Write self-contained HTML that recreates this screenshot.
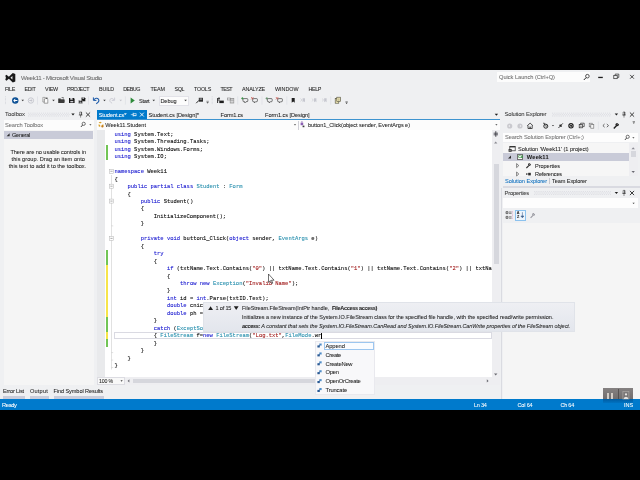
<!DOCTYPE html>
<html lang="en"><head><meta charset="utf-8"><title>Week11 - Microsoft Visual Studio</title>
<style>
html,body{margin:0;padding:0;background:#000;}
body{width:640px;height:480px;overflow:hidden;position:relative;font-family:"Liberation Sans",sans-serif;}
#w{position:absolute;left:0;top:70px;width:640px;height:340px;background:#eff0f2;overflow:hidden;will-change:transform;}
#w div,#w span,#w svg{position:absolute;}
#w span{white-space:pre;line-height:10px;height:10px;-webkit-text-stroke:0.06px currentColor;}
.m{-webkit-text-stroke:0.1px currentColor !important;}
.m{font-family:"Liberation Mono",monospace;}
.m b{font-weight:normal;}
.k{color:#1a1ad0;}.t{color:#2b91af;}.s{color:#a32020;}
</style></head><body><div id="w">
<span style="left:21.00px;top:3.00px;font-size:6.2px;color:#6a6a6a;letter-spacing:-0.295px;">Week11 - Microsoft Visual Studio</span>
<div style="left:497px;top:2.299999999999997px;width:93px;height:9.3px;background:#fcfcfc;"></div>
<span style="left:499.00px;top:2.40px;font-size:5.7px;color:#6d6d6d;letter-spacing:-0.036px;">Quick Launch (Ctrl+Q)</span>
<span style="left:5.00px;top:14.00px;font-size:5.4px;color:#1e1e1e;letter-spacing:-0.348px;">FILE</span>
<span style="left:24.40px;top:14.00px;font-size:5.4px;color:#1e1e1e;letter-spacing:-0.270px;">EDIT</span>
<span style="left:45.00px;top:14.00px;font-size:5.4px;color:#1e1e1e;letter-spacing:-0.195px;">VIEW</span>
<span style="left:67.00px;top:14.00px;font-size:5.4px;color:#1e1e1e;letter-spacing:-0.453px;">PROJECT</span>
<span style="left:99.00px;top:14.00px;font-size:5.4px;color:#1e1e1e;letter-spacing:-0.178px;">BUILD</span>
<span style="left:123.20px;top:14.00px;font-size:5.4px;color:#1e1e1e;letter-spacing:-0.474px;">DEBUG</span>
<span style="left:150.40px;top:14.00px;font-size:5.4px;color:#1e1e1e;letter-spacing:-0.096px;">TEAM</span>
<span style="left:174.60px;top:14.00px;font-size:5.4px;color:#1e1e1e;letter-spacing:-0.466px;">SQL</span>
<span style="left:194.00px;top:14.00px;font-size:5.4px;color:#1e1e1e;letter-spacing:-0.237px;">TOOLS</span>
<span style="left:220.40px;top:14.00px;font-size:5.4px;color:#1e1e1e;letter-spacing:-0.545px;">TEST</span>
<span style="left:242.00px;top:14.00px;font-size:5.4px;color:#1e1e1e;letter-spacing:-0.167px;">ANALYZE</span>
<span style="left:275.00px;top:14.00px;font-size:5.4px;color:#1e1e1e;letter-spacing:-0.009px;">WINDOW</span>
<span style="left:308.40px;top:14.00px;font-size:5.4px;color:#1e1e1e;letter-spacing:-0.373px;">HELP</span>
<span style="left:139.00px;top:25.50px;font-size:5.6px;color:#1e1e1e;letter-spacing:-0.286px;">Start</span>
<div style="left:159px;top:26px;width:29.5px;height:9.5px;background:#fcfcfc;border:0.5px solid #e2e2e8;box-sizing:border-box;"></div>
<span style="left:160.40px;top:25.50px;font-size:5.6px;color:#1e1e1e;letter-spacing:-0.057px;">Debug</span>
<div style="left:4px;top:49.5px;width:89.5px;height:265.5px;background:#f5f5f5;"></div>
<span style="left:5.00px;top:39.40px;font-size:5.9px;color:#3c3c3c;letter-spacing:-0.045px;">Toolbox</span>
<div style="left:4px;top:49.5px;width:89.5px;height:10.5px;background:#fcfcfc;"></div>
<span style="left:5.00px;top:49.50px;font-size:5.7px;color:#747474;letter-spacing:-0.079px;">Search Toolbox</span>
<div style="left:4px;top:61px;width:89.3px;height:7.6px;background:#c9cbd8;"></div>
<span style="left:12.00px;top:59.90px;font-size:5.6px;color:#1e1e1e;letter-spacing:-0.272px;">General</span>
<span style="left:10.40px;top:77.30px;font-size:5.6px;color:#1e1e1e;letter-spacing:-0.049px;">There are no usable controls in</span>
<span style="left:11.60px;top:84.10px;font-size:5.6px;color:#1e1e1e;letter-spacing:0.043px;">this group. Drag an item onto</span>
<span style="left:8.80px;top:90.90px;font-size:5.6px;color:#1e1e1e;">this text to add it to the toolbox.</span>
<svg style="left:0;top:0;width:640px;height:340px" viewBox="0 70 640 340"><g transform="translate(5.3 73.1) scale(0.0625)" fill="#1a1a1a" fill-rule="evenodd"><path d="M120 0L160 16V134L120 150L40 75ZM114 48V102L82 75Z"/><path d="M0 42L18 28L76 75L18 122L0 108L10 75Z"/></g><circle cx="587.4" cy="76.2" r="1.8" fill="none" stroke="#2b2b2b" stroke-width="0.8"/><line x1="586.1" y1="77.6" x2="583.8" y2="80" stroke="#2b2b2b" stroke-width="1.0" /><rect x="598.2" y="76.8" width="4.6" height="1.3" fill="#1e1e1e"/><rect x="613.8" y="75.6" width="3.4" height="3.1" fill="none" stroke="#1e1e1e" stroke-width="0.65"/><path d="M615.2 75.4v-1.3h3.6v3.3h-1.4" fill="none" stroke="#1e1e1e" stroke-width="0.65"/><path d="M630.1 74.9L633.9 78.7M633.9 74.9L630.1 78.7" fill="none" stroke="#1e1e1e" stroke-width="0.8"/><line x1="5.5" y1="96.5" x2="5.5" y2="104.5" stroke="#c2c3cc" stroke-width="0.7" stroke-dasharray="0.6 0.8"/><circle cx="15.25" cy="100.5" r="3.2" fill="#0b4f94"/><path d="M13.2 100.5l2-1.9v1.3h2.2v1.2h-2.2v1.3z" fill="#fff"/><path d="M21.45 99.75h2.6l-1.3 1.5z" fill="#3a3a3a"/><circle cx="30.9" cy="100.5" r="2.7" fill="none" stroke="#c3c4cc" stroke-width="0.9"/><path d="M32.6 100.5l-1.7-1.5v1h-1.6v1h1.6v1z" fill="#c3c4cc"/><line x1="37.5" y1="96.4" x2="37.5" y2="104.6" stroke="#d9dae0" stroke-width="0.6" /><path d="M44.2 98.2h2.2l1.4 1.4v3.6h-3.6z" fill="#fbfbfb" stroke="#5a5a5a" stroke-width="0.55"/><path d="M42.8 97.4h2.4v1.6h-1v3h-1.4z" fill="#f4f4f4" stroke="#6e6e6e" stroke-width="0.5"/><rect x="46.2" y="97.6" width="1.3" height="1.3" fill="#3a3a3a"/><path d="M52.2 99.75h2.6l-1.3 1.5z" fill="#3a3a3a"/><path d="M58.3 98.4h2.2l0.6 0.8h3.3v3.9h-6.1z" fill="#262626"/><path d="M59.6 100.6h5.2l-1 2.5h-5z" fill="#3c3c3c"/><path d="M61.6 97.6h1.8v1" fill="none" stroke="#262626" stroke-width="0.6"/><rect x="59.3" y="99.6" width="4.2" height="0.5" fill="#8a8a8a"/><path d="M69 98h4.8l0.8 0.8v4.2h-5.6z" fill="#161616"/><rect x="70.3" y="98" width="2.6" height="1.7" fill="#e4e4e8"/><rect x="70.3" y="100.9" width="3" height="1.5" fill="#d0d0d6"/><rect x="71.9" y="98.2" width="0.7" height="1.2" fill="#161616"/><path d="M81.5 97.6h3.2l0.6 0.6v3.1h-3.8z" fill="#161616"/><rect x="82.4" y="97.6" width="1.7" height="1.1" fill="#e4e4e8"/><path d="M78.6 100.2h3.3l0.6 0.6v2.6h-3.9z" fill="#161616" stroke="#eff0f2" stroke-width="0.35"/><rect x="79.5" y="100.3" width="1.7" height="1" fill="#e4e4e8"/><rect x="79.6" y="102.3" width="1.9" height="0.9" fill="#c8c8ce"/><line x1="88.5" y1="96.4" x2="88.5" y2="104.6" stroke="#d9dae0" stroke-width="0.6" /><path d="M93.4 97.4v3h3" fill="none" stroke="#1c5aa8" stroke-width="1.0"/><path d="M93.8 100c1.2-1.9 3.4-2.3 4.6-0.9 1.2 1.5 0.2 3.6-2.2 4.6" fill="none" stroke="#1c5aa8" stroke-width="1.1"/><path d="M103.2 99.75h2.6l-1.3 1.5z" fill="#3a3a3a"/><path d="M114.6 97.6v2.8h-2.8" fill="none" stroke="#c9cad2" stroke-width="0.9"/><path d="M114.2 100c-1-1.7-3-2-4-0.8-1 1.3-0.2 3.1 1.9 4" fill="none" stroke="#c9cad2" stroke-width="0.9"/><path d="M119.45 99.75h2.6l-1.3 1.5z" fill="#c0c1c9"/><line x1="125.4" y1="96.4" x2="125.4" y2="104.6" stroke="#d9dae0" stroke-width="0.6" /><path d="M130.6 97.5l4.2 3-4.2 3z" fill="#2d8a3a"/><path d="M152.45 99.75h2.6l-1.3 1.5z" fill="#3a3a3a"/><path d="M184.3 99.75h2.6l-1.3 1.5z" fill="#3a3a3a"/><path d="M198.8 97.8h4.2v3.9h-4.2z" fill="#2b2b2b"/><rect x="199.6" y="98.6" width="2.6" height="0.9" fill="#c9cad0"/><path d="M196.2 103.2l2.8-2.9" fill="none" stroke="#2b2b2b" stroke-width="1.0"/><path d="M206.4 102.2h2.4l-1.2 1.4z" fill="#3a3a3a"/><line x1="206.4" y1="101.3" x2="208.8" y2="101.3" stroke="#3a3a3a" stroke-width="0.5" /><line x1="212.2" y1="96.5" x2="212.2" y2="104.5" stroke="#c2c3cc" stroke-width="0.7" stroke-dasharray="0.6 0.8"/><path d="M217.6 98v5M217.6 100h2.2" fill="none" stroke="#1e1e1e" stroke-width="0.9"/><rect x="219.3" y="100.6" width="4.5" height="2.5" fill="#1e1e1e"/><rect x="218.2" y="97.6" width="1.6" height="1.4" fill="#1e1e1e"/><rect x="227.4" y="98" width="3" height="2" fill="none" stroke="#8a8a8a" stroke-width="0.6"/><rect x="230.2" y="98.4" width="3.6" height="4.6" fill="none" stroke="#8a8a8a" stroke-width="0.7"/><line x1="230.2" y1="100.2" x2="233.8" y2="100.2" stroke="#8a8a8a" stroke-width="0.6" /><line x1="232" y1="98.4" x2="232" y2="103" stroke="#8a8a8a" stroke-width="0.5" /><line x1="237.75" y1="96.4" x2="237.75" y2="104.6" stroke="#d9dae0" stroke-width="0.6" /><path d="M243.8 98.6h3.2q0.8 0 0.8 0.8v1.5q0 0.8-0.8 0.8h-1l-1.1 1.2-0.2-1.2h-0.9q-0.8 0-0.8-0.8v-1.5q0-0.8 0.8-0.8z" fill="none" stroke="#333" stroke-width="0.65"/><path d="M242.4 97.2v2.4M241.2 98.4h2.4" fill="none" stroke="#2c8a3a" stroke-width="0.8"/><path d="M253.4 98.6h3.2q0.8 0 0.8 0.8v1.5q0 0.8-0.8 0.8h-1l-1.1 1.2-0.2-1.2h-0.9q-0.8 0-0.8-0.8v-1.5q0-0.8 0.8-0.8z" fill="none" stroke="#333" stroke-width="0.65"/><path d="M251.2 97.2l2.2 2.2M253.4 97.2l-2.2 2.2" fill="none" stroke="#c2463c" stroke-width="0.75"/><line x1="262" y1="96.4" x2="262" y2="104.6" stroke="#d9dae0" stroke-width="0.6" /><path d="M268.2 98.6h3.2q0.8 0 0.8 0.8v1.5q0 0.8-0.8 0.8h-1l-1.1 1.2-0.2-1.2h-0.9q-0.8 0-0.8-0.8v-1.5q0-0.8 0.8-0.8z" fill="none" stroke="#333" stroke-width="0.65"/><path d="M266.8 97.2v2.4M265.6 98.4h2.4" fill="none" stroke="#5a8a62" stroke-width="0.8"/><path d="M278.4 98.6h3.2q0.8 0 0.8 0.8v1.5q0 0.8-0.8 0.8h-1l-1.1 1.2-0.2-1.2h-0.9q-0.8 0-0.8-0.8v-1.5q0-0.8 0.8-0.8z" fill="none" stroke="#333" stroke-width="0.65"/><path d="M276 97.2l2.2 2.2M278.2 97.2l-2.2 2.2" fill="none" stroke="#c2463c" stroke-width="0.75"/><line x1="286.8" y1="96.4" x2="286.8" y2="104.6" stroke="#d9dae0" stroke-width="0.6" /><path d="M291.7 97.9h3v4.8l-1.5-1.2-1.5 1.2z" fill="#1e1e1e"/><path d="M302.6 98.2h2.4v4l-1.2-1-1.2 1z" fill="#c6c7cf"/><path d="M300.4 98.6l1.6 1.4-1.6 1.4" fill="none" stroke="#c6c7cf" stroke-width="0.6"/><path d="M314.0 98.2h2.4v4l-1.2-1-1.2 1z" fill="#c6c7cf"/><path d="M311.79999999999995 98.6l1.6 1.4-1.6 1.4" fill="none" stroke="#c6c7cf" stroke-width="0.6"/><path d="M324.20000000000005 98.2h2.4v4l-1.2-1-1.2 1z" fill="#c6c7cf"/><path d="M322.0 98.6l1.6 1.4-1.6 1.4" fill="none" stroke="#c6c7cf" stroke-width="0.6"/><line x1="330.7" y1="96.4" x2="330.7" y2="104.6" stroke="#d9dae0" stroke-width="0.6" /><rect x="335.2" y="98.6" width="3.6" height="4.6" fill="#f3e9b8" stroke="#4a4a3a" stroke-width="0.6"/><rect x="336.8" y="97.2" width="3.8" height="4.4" fill="#f3e9b8" stroke="#4a4a3a" stroke-width="0.6"/><path d="M337.8 99h1.8M337.8 100.2h1.8" fill="none" stroke="#6a6a4a" stroke-width="0.4"/><path d="M345.4 102.6h2.4l-1.2 1.4z" fill="#3a3a3a"/><line x1="345.4" y1="101.7" x2="347.8" y2="101.7" stroke="#3a3a3a" stroke-width="0.5" /><line x1="28" y1="113.2" x2="69.5" y2="113.2" stroke="#b9b9c4" stroke-width="0.55" stroke-dasharray="0.6 1.3"/><line x1="28.95" y1="114.6" x2="69.5" y2="114.6" stroke="#b9b9c4" stroke-width="0.55" stroke-dasharray="0.6 1.3"/><line x1="28" y1="116" x2="69.5" y2="116" stroke="#b9b9c4" stroke-width="0.55" stroke-dasharray="0.6 1.3"/><path d="M71.3 113.6h3.4l-1.7 2z" fill="#1e1e1e"/><path d="M79.7 112h1.9v3h-1.9zM78.8 115h3.7M80.6 115v2.6" fill="none" stroke="#2b2b2b" stroke-width="0.5"/><rect x="80.95" y="112" width="0.6" height="3" fill="#2b2b2b"/><path d="M85.9 112.5L90.1 116.7M90.1 112.5L85.9 116.7" fill="none" stroke="#1e1e1e" stroke-width="0.85"/><circle cx="83.7" cy="123.8" r="1.6" fill="none" stroke="#2b2b2b" stroke-width="0.65"/><line x1="82.6" y1="125" x2="80.9" y2="127" stroke="#2b2b2b" stroke-width="0.85" /><path d="M89.3 124.15h2.2l-1.1 1.3z" fill="#3a3a3a"/><path d="M9.6 133.3v3h-3z" fill="#2b2b2b"/></svg>
<div style="left:97px;top:40.2px;width:49.5px;height:9px;background:#007acc;"></div>
<div style="left:97px;top:48.8px;width:403px;height:1.3px;background:#3d93cf;"></div>
<span style="left:98.70px;top:39.50px;font-size:5.7px;color:#fff;letter-spacing:-0.127px;">Student.cs*</span>
<span style="left:148.60px;top:39.50px;font-size:5.7px;color:#1e1e1e;letter-spacing:-0.057px;">Student.cs [Design]*</span>
<span style="left:220.60px;top:39.50px;font-size:5.7px;color:#1e1e1e;letter-spacing:-0.163px;">Form1.cs</span>
<span style="left:265.00px;top:39.50px;font-size:5.7px;color:#1e1e1e;letter-spacing:-0.092px;">Form1.cs [Design]</span>
<div style="left:97px;top:50px;width:402.5px;height:10px;background:#fcfcfc;"></div>
<div style="left:97px;top:59.599999999999994px;width:402.5px;height:0.6px;background:#d4d4dc;"></div>
<span style="left:105.30px;top:49.60px;font-size:5.6px;color:#1e1e1e;letter-spacing:-0.010px;">Week11.Student</span>
<span style="left:308.00px;top:49.60px;font-size:5.6px;color:#1e1e1e;letter-spacing:-0.061px;">button1_Click(object sender, EventArgs e)</span>
<div style="left:297.5px;top:50.5px;width:0.6px;height:9px;background:#cfcfd6;"></div>
<div style="left:97px;top:60.19999999999999px;width:395px;height:247px;background:#ffffff;"></div>
<div style="left:97px;top:60.19999999999999px;width:7.6px;height:247px;background:#e9eaec;"></div>
<div style="left:105.6px;top:75.19999999999999px;width:2.4px;height:15px;background:#72c555;"></div>
<div style="left:105.6px;top:180px;width:2.4px;height:14.5px;background:#72c555;"></div>
<div style="left:105.6px;top:194.5px;width:2.4px;height:52.5px;background:#f7e54a;"></div>
<div style="left:105.6px;top:247px;width:2.4px;height:15px;background:#72c555;"></div>
<div style="left:105.6px;top:262px;width:2.4px;height:7px;background:#f7e54a;"></div>
<div style="left:105.6px;top:269px;width:2.4px;height:7.6px;background:#72c555;"></div>
<div style="left:113.6px;top:262.4px;width:378.4px;height:6.8px;background:#fff;border:0.6px solid #dadae2;box-sizing:border-box;"></div>
<svg style="left:0;top:0;width:640px;height:340px" viewBox="0 70 640 340"><path d="M133.2 113.5h3v2.2h-3zM133.2 112.7v3.8M133.2 114.6h-2.4" fill="none" stroke="#e8f3fb" stroke-width="0.6"/><rect x="133.2" y="114.9" width="3" height="0.8" fill="#e8f3fb"/><path d="M140 112.7L143.8 116.5M143.8 112.7L140 116.5" fill="none" stroke="#fff" stroke-width="0.9"/><path d="M494.7 113.8h3.4l-1.7 2z" fill="#1e1e1e"/><path d="M98.6 122.6l1.6-0.8 1.6 0.8-1.6 0.8zM98.6 124.2l1.6 0.8v2l-1.6-0.8zM103.4 124.2l-1.6 0.8v2l1.6-0.8z" fill="#d8a12c"/><circle cx="102.4" cy="126.4" r="1.1" fill="#c47a1a"/><path d="M293.9 124.15h2.2l-1.1 1.3z" fill="#3a3a3a"/><rect x="300.6" y="122.6" width="2.6" height="2.6" fill="#8b5fb3"/><rect x="302.6" y="125.6" width="1.8" height="1.6" fill="#3a3a3a"/><path d="M301 121.8h1.8" fill="none" stroke="#6d3f99" stroke-width="0.5"/><path d="M495.3 124.15h2.2l-1.1 1.3z" fill="#3a3a3a"/><line x1="111.5" y1="175" x2="111.5" y2="369.5" stroke="#b2b2b2" stroke-width="0.4" /><rect x="109.5" y="169.28" width="4" height="4" fill="#fff" stroke="#b2b2b2" stroke-width="0.5"/><line x1="110.4" y1="171.28" x2="112.6" y2="171.28" stroke="#555" stroke-width="0.5" /><rect x="109.5" y="184.19" width="4" height="4" fill="#fff" stroke="#b2b2b2" stroke-width="0.5"/><line x1="110.4" y1="186.19" x2="112.6" y2="186.19" stroke="#555" stroke-width="0.5" /><rect x="109.5" y="199.09" width="4" height="4" fill="#fff" stroke="#b2b2b2" stroke-width="0.5"/><line x1="110.4" y1="201.09" x2="112.6" y2="201.09" stroke="#555" stroke-width="0.5" /><rect x="109.5" y="236.37" width="4" height="4" fill="#fff" stroke="#b2b2b2" stroke-width="0.5"/><line x1="110.4" y1="238.37" x2="112.6" y2="238.37" stroke="#555" stroke-width="0.5" /><line x1="111.5" y1="225.86" x2="113.2" y2="225.86" stroke="#b2b2b2" stroke-width="0.4" /><line x1="111.5" y1="352.59" x2="113.2" y2="352.59" stroke="#b2b2b2" stroke-width="0.4" /><line x1="111.5" y1="360.05" x2="113.2" y2="360.05" stroke="#b2b2b2" stroke-width="0.4" /><line x1="111.5" y1="367.5" x2="113.2" y2="367.5" stroke="#b2b2b2" stroke-width="0.4" /></svg>
<span class="m" style="left:114.4px;top:59.90px;font-size:5.47px;color:#0c0c0c;"><b class="k">using</b> System.Text;</span>
<span class="m" style="left:114.4px;top:67.36px;font-size:5.47px;color:#0c0c0c;"><b class="k">using</b> System.Threading.Tasks;</span>
<span class="m" style="left:114.4px;top:74.81px;font-size:5.47px;color:#0c0c0c;"><b class="k">using</b> System.Windows.Forms;</span>
<span class="m" style="left:114.4px;top:82.27px;font-size:5.47px;color:#0c0c0c;"><b class="k">using</b> System.IO;</span>
<span class="m" style="left:114.4px;top:97.18px;font-size:5.47px;color:#0c0c0c;"><b class="k">namespace</b> Week11</span>
<span class="m" style="left:114.4px;top:104.63px;font-size:5.47px;color:#0c0c0c;">{</span>
<span class="m" style="left:114.4px;top:112.09px;font-size:5.47px;color:#0c0c0c;">    <b class="k">public partial class</b> <b class="t">Student</b> : <b class="t">Form</b></span>
<span class="m" style="left:114.4px;top:119.54px;font-size:5.47px;color:#0c0c0c;">    {</span>
<span class="m" style="left:114.4px;top:127.00px;font-size:5.47px;color:#0c0c0c;">        <b class="k">public</b> Student()</span>
<span class="m" style="left:114.4px;top:134.45px;font-size:5.47px;color:#0c0c0c;">        {</span>
<span class="m" style="left:114.4px;top:141.91px;font-size:5.47px;color:#0c0c0c;">            InitializeComponent();</span>
<span class="m" style="left:114.4px;top:149.36px;font-size:5.47px;color:#0c0c0c;">        }</span>
<span class="m" style="left:114.4px;top:164.27px;font-size:5.47px;color:#0c0c0c;">        <b class="k">private void</b> button1_Click(<b class="k">object</b> sender, <b class="t">EventArgs</b> e)</span>
<span class="m" style="left:114.4px;top:171.73px;font-size:5.47px;color:#0c0c0c;">        {</span>
<span class="m" style="left:114.4px;top:179.18px;font-size:5.47px;color:#0c0c0c;">            <b class="k">try</b></span>
<span class="m" style="left:114.4px;top:186.63px;font-size:5.47px;color:#0c0c0c;">            {</span>
<span class="m" style="left:114.4px;top:194.09px;font-size:5.47px;color:#0c0c0c;">                <b class="k">if</b> (txtName.Text.Contains(<b class="s">"0"</b>) || txtName.Text.Contains(<b class="s">"1"</b>) || txtName.Text.Contains(<b class="s">"2"</b>) || txtNa</span>
<span class="m" style="left:114.4px;top:201.55px;font-size:5.47px;color:#0c0c0c;">                {</span>
<span class="m" style="left:114.4px;top:209.00px;font-size:5.47px;color:#0c0c0c;">                    <b class="k">throw new</b> <b class="t">Exception</b>(<b class="s">"Invalid Name"</b>);</span>
<span class="m" style="left:114.4px;top:216.46px;font-size:5.47px;color:#0c0c0c;">                }</span>
<span class="m" style="left:114.4px;top:223.91px;font-size:5.47px;color:#0c0c0c;">                <b class="k">int</b> id = <b class="k">int</b>.Parse(txtID.Text);</span>
<span class="m" style="left:114.4px;top:231.37px;font-size:5.47px;color:#0c0c0c;">                <b class="k">double</b> cnic</span>
<span class="m" style="left:114.4px;top:238.82px;font-size:5.47px;color:#0c0c0c;">                <b class="k">double</b> ph =</span>
<span class="m" style="left:114.4px;top:246.27px;font-size:5.47px;color:#0c0c0c;">            }</span>
<span class="m" style="left:114.4px;top:253.73px;font-size:5.47px;color:#0c0c0c;">            <b class="k">catch</b> (<b class="t">ExceptSo</b></span>
<span class="m" style="left:114.4px;top:261.19px;font-size:5.47px;color:#0c0c0c;">            { <b class="t">FileStream</b> f=<b class="k">new</b> <b class="t">FileStream</b>(<b class="s">"Log.txt"</b>,<b class="t">FileMode</b>.wr</span>
<span class="m" style="left:114.4px;top:268.64px;font-size:5.47px;color:#0c0c0c;">            }</span>
<span class="m" style="left:114.4px;top:276.10px;font-size:5.47px;color:#0c0c0c;">        }</span>
<span class="m" style="left:114.4px;top:283.55px;font-size:5.47px;color:#0c0c0c;">    }</span>
<span class="m" style="left:114.4px;top:291.00px;font-size:5.47px;color:#0c0c0c;">}</span>
<div style="left:321.2px;top:263.2px;width:0.6px;height:5.4px;background:#000;"></div>
<div style="left:492px;top:60.19999999999999px;width:7.5px;height:254.5px;background:#eeeef1;"></div>
<div style="left:494px;top:94px;width:4.5px;height:100px;background:#d6d7dd;"></div>
<div style="left:97px;top:307px;width:395px;height:7.7px;background:#eeeef1;"></div>
<div style="left:133px;top:308.7px;width:232.5px;height:4.2px;background:#d6d7dd;"></div>
<div style="left:97px;top:307px;width:28px;height:7.7px;background:#f8f8f8;border:0.5px solid #dcdce2;box-sizing:border-box;"></div>
<span style="left:99.00px;top:305.80px;font-size:5.3px;color:#1e1e1e;letter-spacing:-0.206px;">100 %</span>
<span style="left:3.00px;top:316.20px;font-size:5.6px;color:#1e1e1e;letter-spacing:-0.170px;">Error List</span>
<span style="left:30.00px;top:316.20px;font-size:5.6px;color:#1e1e1e;letter-spacing:0.201px;">Output</span>
<span style="left:53.50px;top:316.20px;font-size:5.6px;color:#1e1e1e;letter-spacing:-0.095px;">Find Symbol Results</span>
<div style="left:3px;top:326.2px;width:21.5px;height:2.8px;background:#c9ccda;"></div>
<div style="left:30px;top:326.2px;width:18.5px;height:2.8px;background:#c9ccda;"></div>
<div style="left:53.5px;top:326.2px;width:50px;height:2.8px;background:#c9ccda;"></div>
<div style="left:502.5px;top:72.5px;width:135px;height:33.6px;background:#f6f6f6;"></div>
<span style="left:504.60px;top:39.40px;font-size:5.9px;color:#3c3c3c;letter-spacing:-0.180px;">Solution Explorer</span>
<div style="left:502.5px;top:62.599999999999994px;width:135px;height:9.8px;background:#fdfdfd;"></div>
<span style="left:505.00px;top:62.40px;font-size:5.7px;color:#747474;letter-spacing:-0.098px;">Search Solution Explorer (Ctrl+;)</span>
<div style="left:629px;top:73px;width:8.5px;height:33px;background:#eeeef1;"></div>
<div style="left:631px;top:80.80000000000001px;width:4.6px;height:6.4px;background:#d6d7dd;"></div>
<span style="left:518.00px;top:73.90px;font-size:5.6px;color:#1e1e1e;">Solution &#x27;Week11&#x27; (1 project)</span>
<div style="left:502.5px;top:83px;width:126.5px;height:8px;background:#c9cbd8;"></div>
<div style="left:517px;top:83.9px;width:6.4px;height:6.2px;background:#f6f9f4;border:0.55px solid #707070;box-sizing:border-box;"></div>
<span style="left:518.20px;top:82.00px;font-size:3.7px;color:#2f8f3f;letter-spacing:-0.159px;font-weight:bold;">C#</span>
<span style="left:526.80px;top:82.20px;font-size:5.7px;color:#1e1e1e;letter-spacing:0.203px;font-weight:bold;">Week11</span>
<span style="left:535.00px;top:90.50px;font-size:5.6px;color:#1e1e1e;letter-spacing:-0.050px;">Properties</span>
<span style="left:535.00px;top:98.90px;font-size:5.6px;color:#1e1e1e;letter-spacing:-0.161px;">References</span>
<span style="left:505.00px;top:105.60px;font-size:5.6px;color:#0e70c0;letter-spacing:-0.036px;">Solution Explorer</span>
<div style="left:549.3px;top:107.5px;width:0.6px;height:6.5px;background:#c6c7ce;"></div>
<span style="left:552.00px;top:105.60px;font-size:5.6px;color:#1e1e1e;letter-spacing:-0.097px;">Team Explorer</span>
<div style="left:502.5px;top:115.6px;width:137.5px;height:2.8px;background:#d9dae1;"></div>
<div style="left:500.7px;top:118px;width:0.7px;height:211px;background:#dadbe1;"></div>
<div style="left:502.5px;top:152.5px;width:137.5px;height:176.5px;background:#f5f5f5;"></div>
<span style="left:504.50px;top:117.90px;font-size:5.9px;color:#3c3c3c;letter-spacing:-0.236px;">Properties</span>
<div style="left:502.5px;top:127.6px;width:135px;height:10.8px;background:#fdfdfd;"></div>
<div style="left:515px;top:140px;width:10.8px;height:10.5px;background:#eef5fc;border:0.6px solid #8cc2ee;box-sizing:border-box;"></div>
<svg style="left:0;top:0;width:640px;height:340px" viewBox="0 70 640 340"><path d="M120.5 380.35h2.2l-1.1 1.3z" fill="#3a3a3a"/><path d="M129.4 379.3v3.2l-1.8-1.6z" fill="#6a6a72"/><path d="M486.8 379.3v3.2l1.8-1.6z" fill="#6a6a72"/><path d="M494 373.6h3.4l-1.7 1.9z" fill="#6a6a72"/><path d="M494 143.4h3.4l-1.7-1.9z" fill="#8a8a92"/><path d="M493.6 133.2h4.4M493.6 134.8h4.4" fill="none" stroke="#3a3a42" stroke-width="0.8"/><path d="M495.8 131.2v5.6" fill="none" stroke="#3a3a42" stroke-width="0.9"/><line x1="552" y1="113.2" x2="611" y2="113.2" stroke="#b9b9c4" stroke-width="0.55" stroke-dasharray="0.6 1.3"/><line x1="552.95" y1="114.6" x2="611" y2="114.6" stroke="#b9b9c4" stroke-width="0.55" stroke-dasharray="0.6 1.3"/><line x1="552" y1="116" x2="611" y2="116" stroke="#b9b9c4" stroke-width="0.55" stroke-dasharray="0.6 1.3"/><path d="M614.7 113.6h3.4l-1.7 2z" fill="#1e1e1e"/><path d="M623.1 112h1.9v3h-1.9zM622.2 115h3.7M624 115v2.6" fill="none" stroke="#2b2b2b" stroke-width="0.5"/><rect x="624.35" y="112" width="0.6" height="3" fill="#2b2b2b"/><path d="M629.9 112.5L634.1 116.7M634.1 112.5L629.9 116.7" fill="none" stroke="#1e1e1e" stroke-width="0.85"/><circle cx="509.7" cy="126" r="2.6" fill="#c9c9ce"/><circle cx="520" cy="126" r="2.6" fill="#c9c9ce"/><path d="M508.3 126l1.5-1.3v2.6zM521.4 126l-1.5-1.3v2.6z" fill="#f0f0f3"/><path d="M527.2 125.8l2.9-2.7 2.9 2.7M528 125.6v2.9h4.2v-2.9" fill="none" stroke="#2b2b2b" stroke-width="0.8"/><rect x="529.5" y="126.6" width="1.2" height="1.9" fill="#2b2b2b"/><circle cx="545.8" cy="126.2" r="2" fill="none" stroke="#1e1e1e" stroke-width="0.95"/><path d="M545.8 125v1.3h1" fill="none" stroke="#1e1e1e" stroke-width="0.6"/><path d="M543 123.2l1.8 0.2-0.5 1.5" fill="none" stroke="#1e1e1e" stroke-width="0.7"/><path d="M551.9 124.95h2.2l-1.1 1.3z" fill="#3a3a3a"/><path d="M558.4 128l2.4-2.4M559.4 125.4h1.6v1.6M562.8 123.4l-2.4 2.4M561.8 126h-1.6v-1.6" fill="none" stroke="#1e1e1e" stroke-width="0.85"/><circle cx="571" cy="125.8" r="2.7" fill="#1e1e1e"/><circle cx="571" cy="125.8" r="1.3" fill="none" stroke="#f0f0f2" stroke-width="0.7"/><path d="M569.4 124.2l1.6 1.6M572.6 127.4l-1.6-1.6M572.8 124.6l-1.8 1.2" fill="none" stroke="#1e1e1e" stroke-width="0.7"/><rect x="579.2" y="124.6" width="3.4" height="3.2" fill="#f5f5f5" stroke="#2b2b2b" stroke-width="0.7"/><path d="M580.6 124.4v-1.2h3.6v3.4h-1.4" fill="none" stroke="#2b2b2b" stroke-width="0.7"/><line x1="580" y1="126.2" x2="581.8" y2="126.2" stroke="#2b2b2b" stroke-width="0.6" /><rect x="589.2" y="123.2" width="3" height="3.6" fill="none" stroke="#6a6a6a" stroke-width="0.6"/><rect x="590.8" y="124.6" width="3" height="3.6" fill="#f5f5f5" stroke="#6a6a6a" stroke-width="0.6"/><line x1="598.4" y1="121.6" x2="598.4" y2="129.6" stroke="#d9dae0" stroke-width="0.6" /><path d="M604.6 124l-1.7 1.6 1.7 1.6M606.8 124l1.7 1.6-1.7 1.6" fill="none" stroke="#2b2b2b" stroke-width="0.7"/><path d="M613.8 128.4l2.8-2.8" fill="none" stroke="#1e1e1e" stroke-width="1.4"/><circle cx="617.2" cy="124.6" r="1.7" fill="#1e1e1e"/><path d="M617.4 124.4l1.7-1.7" fill="none" stroke="#eff0f2" stroke-width="0.9"/><path d="M632.6 122.4h2.4l-1.2 1.4z" fill="#3a3a3a"/><line x1="632.6" y1="121.5" x2="635" y2="121.5" stroke="#3a3a3a" stroke-width="0.5" /><circle cx="627.7" cy="136.8" r="1.6" fill="none" stroke="#2b2b2b" stroke-width="0.65"/><line x1="626.6" y1="138" x2="624.9" y2="140" stroke="#2b2b2b" stroke-width="0.85" /><path d="M632.3 137.15h2.2l-1.1 1.3z" fill="#3a3a3a"/><path d="M631.5 149.2h3.4l-1.7-1.9z" fill="#8a8a92"/><path d="M631.5 171h3.4l-1.7 1.9z" fill="#6a6a72"/><rect x="509.8" y="146.4" width="5.4" height="4.4" fill="#f8f8f8" stroke="#2b2b2b" stroke-width="0.7"/><rect x="509.8" y="146.2" width="5.4" height="1.2" fill="#2b2b2b"/><rect x="508.6" y="149" width="3" height="2.8" fill="#2b2b2b"/><path d="M509.3 150.9l1.5-1M509.3 150l1.5 0.9" fill="none" stroke="#fff" stroke-width="0.35"/><path d="M511 155.6v3h-3z" fill="#2b2b2b"/><path d="M516.6 163.6l2.2 2-2.2 2z" fill="none" stroke="#2b2b2b" stroke-width="0.55"/><path d="M526.4 168l2.4-2.4" fill="none" stroke="#2b2b2b" stroke-width="1.1"/><circle cx="529.4" cy="164.6" r="1.4" fill="#2b2b2b"/><path d="M529.4 164.6l1.5-1.5" fill="none" stroke="#f5f5f5" stroke-width="0.7"/><path d="M516.6 172l2.2 2-2.2 2z" fill="none" stroke="#2b2b2b" stroke-width="0.55"/><rect x="526" y="173.4" width="1.3" height="1.3" fill="#2b2b2b"/><rect x="528.2" y="172.8" width="2.6" height="2.6" fill="#2b2b2b"/><line x1="527.2" y1="174" x2="528.4" y2="174" stroke="#2b2b2b" stroke-width="0.4" /><line x1="534" y1="191.6" x2="611" y2="191.6" stroke="#b9b9c4" stroke-width="0.55" stroke-dasharray="0.6 1.3"/><line x1="534.95" y1="193" x2="611" y2="193" stroke="#b9b9c4" stroke-width="0.55" stroke-dasharray="0.6 1.3"/><line x1="534" y1="194.4" x2="611" y2="194.4" stroke="#b9b9c4" stroke-width="0.55" stroke-dasharray="0.6 1.3"/><path d="M614.7 192h3.4l-1.7 2z" fill="#1e1e1e"/><path d="M623.1 190.4h1.9v3h-1.9zM622.2 193.4h3.7M624 193.4v2.6" fill="none" stroke="#2b2b2b" stroke-width="0.5"/><rect x="624.35" y="190.4" width="0.6" height="3" fill="#2b2b2b"/><path d="M629.9 190.9L634.1 195.1M634.1 190.9L629.9 195.1" fill="none" stroke="#1e1e1e" stroke-width="0.85"/><path d="M632.5 202.75h2.2l-1.1 1.3z" fill="#3a3a3a"/><path d="M506 211.6h2v2h-2zM506 216.4h2v2h-2z" fill="#f8f8f8" stroke="#2b2b2b" stroke-width="0.6"/><path d="M506.5 212.6h1M506.5 217.4h1" fill="none" stroke="#2b2b2b" stroke-width="0.5"/><path d="M509 212h2.6M509 213.4h2.6M509 216.8h2.6M509 218.2h2.6" fill="none" stroke="#3a3a3a" stroke-width="0.6"/><line x1="512.5" y1="211" x2="512.5" y2="219.4" stroke="#d070b0" stroke-width="0.45" stroke-dasharray="0.8 0.6"/></svg>
<span style="left:516.80px;top:138.20px;font-size:3.8px;color:#1e1e1e;letter-spacing:0.250px;font-weight:bold;">A</span>
<span style="left:516.90px;top:142.30px;font-size:3.8px;color:#1e1e1e;letter-spacing:0.672px;font-weight:bold;">Z</span>
<svg style="left:0;top:0;width:640px;height:340px" viewBox="0 70 640 340"><path d="M522.4 212.2v5M520.9 216l1.5 1.8 1.5-1.8z" fill="#41638f" stroke="#41638f" stroke-width="0.6"/><path d="M530.6 217.8l2.4-2.4" fill="none" stroke="#9a9aa2" stroke-width="1.1"/><circle cx="533.6" cy="214.4" r="1.4" fill="#9a9aa2"/><path d="M533.6 214.4l1.5-1.5" fill="none" stroke="#f5f5f5" stroke-width="0.7"/></svg>
<div style="left:0px;top:329px;width:640px;height:11px;background:#007acc;"></div>
<span style="left:2.00px;top:329.70px;font-size:5.7px;color:#fff;letter-spacing:-0.391px;">Ready</span>
<span style="left:474.00px;top:329.70px;font-size:5.5px;color:#fff;letter-spacing:-0.253px;">Ln 34</span>
<span style="left:517.50px;top:329.70px;font-size:5.5px;color:#fff;letter-spacing:-0.151px;">Col 64</span>
<span style="left:560.50px;top:329.70px;font-size:5.5px;color:#fff;letter-spacing:-0.237px;">Ch 64</span>
<span style="left:624.00px;top:329.70px;font-size:5.5px;color:#fff;letter-spacing:-0.057px;">INS</span>
<div style="left:203px;top:232.3px;width:371.5px;height:29.4px;background:linear-gradient(#eeeff3,#e3e6ed);border:0.5px solid #e0e3e9;box-sizing:border-box;"></div>
<span style="left:215.50px;top:233.00px;font-size:5.6px;color:#1e1e1e;letter-spacing:-0.187px;">1 of 15</span>
<span style="left:242px;top:233px;font-size:5.5px;color:#1e1e1e;letter-spacing:-0.057px;">FileStream.FileStream(IntPtr handle, <b style="letter-spacing:-0.304px;margin-left:1.3px">FileAccess access)</b></span>
<span style="left:242.00px;top:242.40px;font-size:5.5px;color:#1e1e1e;letter-spacing:-0.012px;">Initializes a new instance of the System.IO.FileStream class for the specified file handle, with the specified read/write permission.</span>
<span style="left:242px;top:251px;font-size:5.5px;color:#1e1e1e;letter-spacing:-0.048px;font-style:italic;"><b style="letter-spacing:-0.312px">access:</b> A constant that sets the System.IO.FileStream.CanRead and System.IO.FileStream.CanWrite properties of the FileStream object.</span>
<div style="left:315px;top:271px;width:60px;height:53.6px;background:#f8f8fa;border:0.5px solid #e9e9ee;box-sizing:border-box;"></div>
<div style="left:324.2px;top:271.7px;width:50.2px;height:8.2px;background:#fafcff;border:0.6px solid #9cc6ef;box-sizing:border-box;"></div>
<span style="left:325.50px;top:270.70px;font-size:5.8px;color:#1e1e1e;letter-spacing:-0.117px;">Append</span>
<span style="left:325.50px;top:279.60px;font-size:5.8px;color:#1e1e1e;letter-spacing:-0.318px;">Create</span>
<span style="left:325.50px;top:288.50px;font-size:5.8px;color:#1e1e1e;letter-spacing:-0.244px;">CreateNew</span>
<span style="left:325.50px;top:297.40px;font-size:5.8px;color:#1e1e1e;letter-spacing:-0.222px;">Open</span>
<span style="left:325.50px;top:306.30px;font-size:5.8px;color:#1e1e1e;letter-spacing:-0.244px;">OpenOrCreate</span>
<span style="left:325.50px;top:315.20px;font-size:5.8px;color:#1e1e1e;letter-spacing:-0.146px;">Truncate</span>
<svg style="left:0;top:0;width:640px;height:340px" viewBox="0 70 640 340"><path d="M208.2 309.9h4.8l-2.4-3.7z" fill="#1e1e1e"/><path d="M233.8 306.3h4.8l-2.4 3.7z" fill="#1e1e1e"/><rect x="319.3" y="343.5" width="2.4" height="2.1" fill="#5a96cf"/><rect x="317.4" y="345.4" width="2.4" height="2.1" fill="#2a5a94"/><line x1="318.6" y1="346.2" x2="320.4" y2="344.6" stroke="#2a5a94" stroke-width="0.6" /><rect x="319.3" y="352.4" width="2.4" height="2.1" fill="#5a96cf"/><rect x="317.4" y="354.3" width="2.4" height="2.1" fill="#2a5a94"/><line x1="318.6" y1="355.1" x2="320.4" y2="353.5" stroke="#2a5a94" stroke-width="0.6" /><rect x="319.3" y="361.3" width="2.4" height="2.1" fill="#5a96cf"/><rect x="317.4" y="363.2" width="2.4" height="2.1" fill="#2a5a94"/><line x1="318.6" y1="364" x2="320.4" y2="362.4" stroke="#2a5a94" stroke-width="0.6" /><rect x="319.3" y="370.2" width="2.4" height="2.1" fill="#5a96cf"/><rect x="317.4" y="372.1" width="2.4" height="2.1" fill="#2a5a94"/><line x1="318.6" y1="372.9" x2="320.4" y2="371.3" stroke="#2a5a94" stroke-width="0.6" /><rect x="319.3" y="379.1" width="2.4" height="2.1" fill="#5a96cf"/><rect x="317.4" y="381" width="2.4" height="2.1" fill="#2a5a94"/><line x1="318.6" y1="381.8" x2="320.4" y2="380.2" stroke="#2a5a94" stroke-width="0.6" /><rect x="319.3" y="388" width="2.4" height="2.1" fill="#5a96cf"/><rect x="317.4" y="389.9" width="2.4" height="2.1" fill="#2a5a94"/><line x1="318.6" y1="390.7" x2="320.4" y2="389.1" stroke="#2a5a94" stroke-width="0.6" /><path d="M268.5 274v8.4l1.9-1.8 1.3 3 1.1-0.5-1.3-2.9h2.6z" fill="#fff" stroke="#111" stroke-width="0.6"/></svg>
<div style="left:602.5px;top:317.8px;width:30.5px;height:11.4px;background:linear-gradient(rgba(124,120,120,0.93),rgba(104,100,100,0.93));"></div>
<div style="left:602.5px;top:329px;width:30.5px;height:4.4px;background:linear-gradient(rgba(0,25,70,0.32),rgba(0,25,70,0.08));"></div>
<div style="left:606.8px;top:322.8px;width:1.9px;height:6.2px;background:#d2ccc6;"></div>
<div style="left:610.7px;top:322.8px;width:1.9px;height:6.2px;background:#d2ccc6;"></div>
<div style="left:617.6px;top:318.6px;width:0.5px;height:10px;background:rgba(70,66,66,0.7);"></div>
<svg style="left:0;top:0;width:640px;height:340px" viewBox="0 70 640 340"><rect x="622.9" y="391.6" width="6" height="7.4" fill="none" stroke="#aaa6a2" stroke-width="0.7"/><circle cx="626" cy="394.4" r="1.15" fill="#e6e2de"/><path d="M623.8 399c0-3 4.4-3 4.4 0z" fill="#e6e2de"/></svg>
</div></body></html>
